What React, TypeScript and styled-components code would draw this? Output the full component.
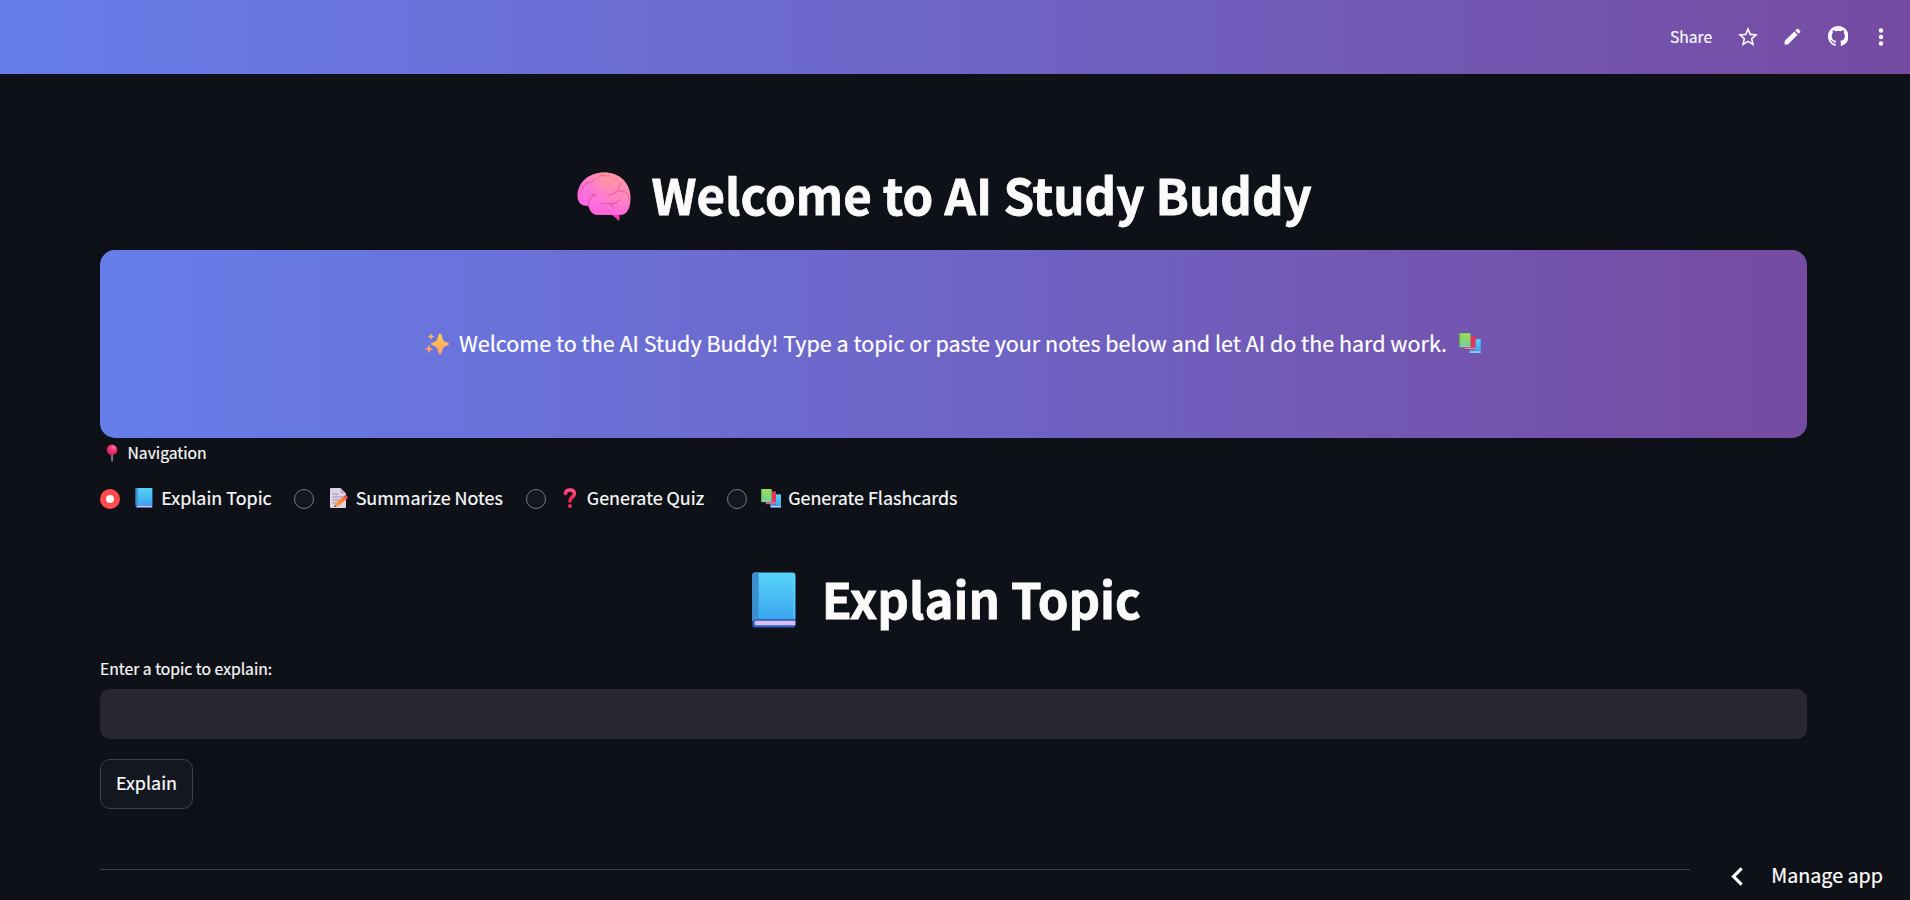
import React, { useState } from 'react';
import styled, { createGlobalStyle } from 'styled-components';
import { MdStarBorder, MdEdit, MdChevronLeft } from 'react-icons/md';

const GlobalStyle = createGlobalStyle`
  * { box-sizing: border-box; }
  body {
    margin: 0;
    background: #0e1117;
    color: #fafafa;
    font-family: "Noto Sans CJK JP", "Noto Sans", sans-serif;
    -webkit-text-stroke: 0.2px;
    overflow: hidden;
  }
`;

const gradient = 'linear-gradient(90deg, #667eea 0%, #764ba2 100%)';

const Page = styled.div`
  height: 900px;
  overflow: hidden;
`;

const Header = styled.header`
  height: 74px;
  padding: 0 26.5px 1px 0;
  display: flex;
  align-items: center;
  justify-content: flex-end;
  background: ${gradient};
`;

const ShareButton = styled.span`
  font-size: 15.7px;
  line-height: 24px;
  margin-right: 23.5px;
`;

const ToolbarIcon = styled.span<{ $gap: number }>`
  display: flex;
  margin-right: ${(p) => p.$gap}px;
`;

const Main = styled.main`
  padding: 0 103px 0 100px;
  display: flex;
  flex-direction: column;
`;

const Heading = styled.h1<{ $top: number; $gap: number; $shift: number }>`
  margin: ${(p) => p.$top}px 0 0;
  padding-right: ${(p) => p.$shift}px;
  display: flex;
  justify-content: center;
  align-items: center;
  gap: ${(p) => p.$gap}px;
  font-size: 49.15px;
  font-weight: 700;
  -webkit-text-stroke: 0.8px;
  line-height: 60px;
  height: 60px;
  white-space: nowrap;
  svg { margin-top: 4px; }
`;

const Banner = styled.section`
  margin-top: 26px;
  height: 188px;
  padding: 0 0 3px 3px;
  border-radius: 15px;
  background: ${gradient};
  display: flex;
  align-items: center;
  justify-content: center;
  gap: 9.5px;
  font-size: 21.5px;
  line-height: 31px;
  color: #fff;
  white-space: nowrap;
  svg { margin-top: 3px; }
`;

const NavLabel = styled.div`
  margin-top: 4px;
  padding-left: 6px;
  display: flex;
  align-items: center;
  gap: 7.5px;
  font-size: 15.7px;
  line-height: 22px;
`;

const RadioGroup = styled.div`
  margin-top: 22px;
  height: 26px;
  display: flex;
  gap: 22.7px;
`;

const RadioOption = styled.label`
  display: flex;
  align-items: center;
  svg { margin: 0 3.3px 0 12px; }
`;

const RadioDot = styled.span<{ $checked: boolean }>`
  width: 20px;
  height: 20px;
  border-radius: 50%;
  display: grid;
  place-items: center;
  background: ${(p) => (p.$checked ? '#ff4b4b' : '#131720')};
  border: ${(p) => (p.$checked ? '0' : '1.25px solid #77797c')};
  &::after {
    content: '';
    display: ${(p) => (p.$checked ? 'block' : 'none')};
    width: 8px;
    height: 8px;
    border-radius: 50%;
    background: #fafafa;
  }
`;

const RadioText = styled.span`
  font-size: 17.92px;
  line-height: 22px;
  padding-bottom: 5px;
  white-space: nowrap;
`;

const FieldLabel = styled.label`
  margin-top: 30px;
  font-size: 15.7px;
  line-height: 22px;
`;

const TopicInput = styled.input`
  margin-top: 9px;
  height: 50px;
  border: 0;
  outline: 0;
  border-radius: 10px;
  background: #262730;
  color: inherit;
  font: inherit;
  padding: 0 16px;
`;

const ExplainButton = styled.button`
  margin-top: 20px;
  width: 93px;
  height: 50px;
  padding: 0 0 5px;
  border: 1px solid #3e4147;
  border-radius: 10px;
  background: #131720;
  color: #fafafa;
  font-family: inherit;
  font-size: 17.95px;
`;

const Divider = styled.hr`
  width: 100%;
  margin: 60px 0 0;
  border: 0;
  height: 1px;
  background: #3d4045;
`;

const ManageApp = styled.div`
  position: fixed;
  right: 0;
  bottom: 0;
  width: 220px;
  height: 48px;
  padding: 0 27px 0 28.5px;
  display: flex;
  align-items: center;
  justify-content: space-between;
  background: #0e1117;
  color: #fff;
  font-size: 19.7px;
  line-height: 24px;
  span { padding-bottom: 3px; }
`;

const GithubIcon = () => (
  <svg width="20.5" height="20.5" viewBox="0 0 16 16" fill="currentColor">
    <path d="M8 0C3.58 0 0 3.58 0 8c0 3.54 2.29 6.53 5.47 7.59.4.07.55-.17.55-.38 0-.19-.01-.82-.01-1.49-2.01.37-2.53-.49-2.69-.94-.09-.23-.48-.94-.82-1.13-.28-.15-.68-.52-.01-.53.63-.01 1.08.58 1.23.82.72 1.21 1.87.87 2.33.66.07-.52.28-.87.51-1.07-1.78-.2-3.64-.89-3.64-3.95 0-.87.31-1.59.82-2.15-.08-.2-.36-1.02.08-2.12 0 0 .67-.21 2.2.82.64-.18 1.32-.27 2-.27s1.36.09 2 .27c1.53-1.04 2.2-.82 2.2-.82.44 1.1.16 1.92.08 2.12.51.56.82 1.27.82 2.15 0 3.07-1.87 3.75-3.65 3.95.29.25.54.73.54 1.48 0 1.07-.01 1.93-.01 2.2 0 .21.15.46.55.38A8.01 8.01 0 0 0 16 8c0-4.42-3.58-8-8-8z" />
  </svg>
);

const MoreIcon = () => (
  <svg width="6" height="18" viewBox="0 0 6 18" fill="currentColor">
    <circle cx="3" cy="2.6" r="2.25" />
    <circle cx="3" cy="9" r="2.25" />
    <circle cx="3" cy="15.4" r="2.25" />
  </svg>
);

const BrainIcon = () => (
  <svg width="54" height="50" viewBox="0 -1 54 50" fill="none">
    <defs>
      <linearGradient id="brain" x1="8" y1="36" x2="44" y2="6" gradientUnits="userSpaceOnUse">
        <stop stopColor="#ff66e8" />
        <stop offset=".5" stopColor="#ff7fcc" />
        <stop offset="1" stopColor="#ff8fb4" />
      </linearGradient>
      <radialGradient id="brainTop" cx="31" cy="3" r="20" gradientUnits="userSpaceOnUse">
        <stop stopColor="#ff9b96" stopOpacity=".85" />
        <stop offset="1" stopColor="#ff9b96" stopOpacity="0" />
      </radialGradient>
      <linearGradient id="brainLow" x1="0" y1="28" x2="0" y2="43" gradientUnits="userSpaceOnUse">
        <stop stopColor="#ff62dd" stopOpacity="0" />
        <stop offset="1" stopColor="#ff62dd" stopOpacity=".85" />
      </linearGradient>
    </defs>
    <path d="M34 42l7.400 6.500q1 .5 1-1V41z" fill="#f237b4" />
    {['brain', 'brainTop', 'brainLow'].map((fill) => (
      <path
        key={fill}
        d="M.5 24C.5 10 12 .5 27 .5S53.5 10 53.5 26c0 9-3 16.8-10 16.8H21c-5 0-8-3-9.5-8.8C5 34 .5 31 .5 24z"
        fill={`url(#${fill})`}
      />
    ))}
    <path d="M11.5 34c-.4-5 1.5-8.5 6.5-11" stroke="#d94fb4" strokeWidth="2.2" strokeLinecap="round" opacity=".45" />
    <path d="M14 22.5q2.5-1 4.5 1" stroke="#d23fa8" strokeWidth="1.2" strokeLinecap="round" opacity=".7" />
    <path d="M3.5 22c.5-5 3.5-10 9-11.5 3-.7 4.500-1.500 5.500-3.500" stroke="#e05a95" strokeWidth="1.3" strokeLinecap="round" opacity=".6" />
    <path d="M22 4.500q3-2 6-.8 2 .8 4.500-.2" stroke="#e4606f" strokeWidth="1.1" strokeLinecap="round" opacity=".7" />
    <path d="M32 23c3.500-.5 7-2.500 9.500-5 .3-3 1-5 2.500-7M41.500 18q2.500 2 6 1.500 4 2 4.500 9" stroke="#e2558f" strokeWidth="1.1" strokeLinecap="round" opacity=".7" />
    <path d="M23.500 31.500q6 .8 9-.3 6 1.500 10-3M32 31.500q3 1.500 4 4" stroke="#df4795" strokeWidth="1.1" strokeLinecap="round" opacity=".7" />
  </svg>
);

const BookGradient = ({ id }: { id: string }) => (
  <linearGradient id={id} x1="0" y1="0" x2="0" y2="1">
    <stop stopColor="#57d3f7" />
    <stop offset="1" stopColor="#3aa5ee" />
  </linearGradient>
);

const BigBookIcon = () => (
  <svg width="44" height="56" viewBox="0 0 44 56">
    <defs><BookGradient id="bigBook" /></defs>
    <rect x=".4" y="1" width="43" height="54.5" rx="2.8" fill="#2f5fc0" />
    <path d="M5 48.800h38.400v4.400H4.500a2.200 2.200 0 0 1 .5-4.400z" fill="#d9bde9" />
    <path d="M3.200 0.500h37.400a2.800 2.800 0 0 1 2.800 2.800V47H3.600Q1.500 47 .4 49V3.300A2.800 2.800 0 0 1 3.200.5z" fill="url(#bigBook)" />
    <path d="M3.200.5H6.600V47h-3Q1.500 47 .4 49V3.300A2.800 2.800 0 0 1 3.200.5z" fill="#3b8fcd" />
    <path d="M42 3v43" stroke="#68e0ff" strokeWidth="1.4" opacity=".6" />
  </svg>
);

const PinIcon = () => (
  <svg width="14" height="18" viewBox="0 0 14 18">
    <defs>
      <radialGradient id="pin" cx=".62" cy=".3" r=".7">
        <stop stopColor="#ff8cae" />
        <stop offset=".35" stopColor="#f83c76" />
        <stop offset="1" stopColor="#d91f62" />
      </radialGradient>
    </defs>
    <rect x="5.2" y="9" width="1.7" height="8.5" rx=".8" fill="#90839a" />
    <circle cx="6" cy="5.7" r="5.3" fill="url(#pin)" />
  </svg>
);

const SmallBookIcon = () => (
  <svg width="26" height="24" viewBox="0 0 26 24">
    <defs><BookGradient id="smallBook" /></defs>
    <rect x="3.7" y="1" width="16.6" height="20" rx="1" fill="#3568c4" />
    <rect x="5" y="18.6" width="15.3" height="1.5" fill="#d9c4ee" />
    <path d="M4.700 1h14.600a1 1 0 0 1 1 1v16H3.700V2a1 1 0 0 1 1-1z" fill="url(#smallBook)" />
    <path d="M4.700 1H6v17H3.700V2a1 1 0 0 1 1-1z" fill="#3b93d2" />
  </svg>
);

const MemoIcon = () => (
  <svg width="26" height="24" viewBox="0 0 26 24">
    <defs>
      <linearGradient id="pencil" x1="8" y1="20" x2="21" y2="9" gradientUnits="userSpaceOnUse">
        <stop stopColor="#ffa84c" />
        <stop offset="1" stopColor="#f66a2c" />
      </linearGradient>
    </defs>
    <path d="M5 1h9.500l5.500 5.500V20a1 1 0 0 1-1 1H5a1 1 0 0 1-1-1V2a1 1 0 0 1 1-1z" fill="#dfd3e6" />
    <path d="M14.500 1v4.500a1 1 0 0 0 1 1H20z" fill="#b8a9c4" />
    <path d="M6.500 7h6M6.500 10h10M6.500 13h7M6.500 16h4" stroke="#9d8da8" strokeWidth="1" />
    <path d="M8 20.300l1.200-4.100 8-6.800 3 3-8.200 7z" fill="url(#pencil)" />
    <path d="M17.200 9.400l1.800-1.300q2.500.5 3 3l-1.800 1.300z" fill="#f8464f" />
    <path d="M8 20.300l.7-2.300 1.500 1.700z" fill="#5b3a4a" />
  </svg>
);

const QuestionIcon = () => (
  <svg width="26" height="24" viewBox="0 0 26 24" fill="none">
    <defs>
      <linearGradient id="question" x1="14" y1="1" x2="11" y2="20" gradientUnits="userSpaceOnUse">
        <stop stopColor="#fb5b92" />
        <stop offset=".6" stopColor="#f3224f" />
        <stop offset="1" stopColor="#f8315a" />
      </linearGradient>
    </defs>
    <path d="M7.400 6.500C7.600 4.300 9.500 3 12 3c2.600 0 4.400 1.400 4.400 3.800 0 3.700-4.400 3.300-4.400 7.200" stroke="url(#question)" strokeWidth="3.6" strokeLinecap="round" />
    <circle cx="12" cy="19" r="2" fill="#f02b54" />
  </svg>
);

const BooksIcon = ({ id, width, height }: { id: string; width: number; height: number }) => (
  <svg width={width} height={height} viewBox="0 0 26 24">
    <defs>
      <linearGradient id={id + 'Green'} x1="0" y1="0" x2="0" y2="1">
        <stop stopColor="#a0dc55" />
        <stop offset="1" stopColor="#6fd58e" />
      </linearGradient>
      <BookGradient id={id + 'Blue'} />
    </defs>
    <rect x="11.2" y="7.5" width="10.8" height="13.5" fill="#3a6fca" />
    <rect x="11.8" y="18.8" width="10.2" height="1.3" fill="#cdd8f2" />
    <rect x="11.2" y="7.5" width="10.8" height="11" fill={`url(#${id}Blue)`} />
    <rect x="6.5" y="4.5" width="10.5" height="12.8" fill="#b52256" />
    <rect x="7" y="15.4" width="10" height="1.1" fill="#deb2d0" />
    <rect x="6.5" y="4.5" width="10.5" height="10.5" fill="#e8325e" />
    <rect x="2" y="2" width="10.5" height="13.3" rx=".5" fill="#3f9a62" />
    <rect x="2.6" y="13.4" width="9.9" height="1.1" fill="#d5e3df" />
    <rect x="2" y="2" width="10.5" height="11" rx=".5" fill={`url(#${id}Green)`} />
    <rect x="2" y="2" width="1.2" height="11" fill="#62b351" />
  </svg>
);

const SparklesIcon = () => (
  <svg width="24" height="22" viewBox="0 0 24 22">
    <defs>
      <linearGradient id="spark" x1="0" y1="0" x2="0" y2="1">
        <stop stopColor="#ffd04f" />
        <stop offset="1" stopColor="#ff9d68" />
      </linearGradient>
    </defs>
    <path d="M13.900 1Q15 0 16.100 1L18 6.700Q18.500 8 19.800 8.600L23.300 10Q24.600 11 23.300 12L19.800 13.400Q18.500 14 18 15.300L16.100 21Q15 22 13.900 21L12 15.300Q11.500 14 10.200 13.400L6.700 12Q5.400 11 6.700 10L10.200 8.600Q11.500 8 12 6.700z" fill="url(#spark)" />
    <path d="M6 .2l1 2.300 2.300 1L7 4.500 6 6.800 5 4.500l-2.300-1L5 2.500z" fill="#ffb95b" />
    <path d="M4 11.500l1.200 3L8 15.900l-2.800 1.300L4 20.700l-1.200-3.500L0 15.900l2.800-1.400z" fill="#ff9f68" />
  </svg>
);

const options = [
  { label: 'Explain Topic', icon: <SmallBookIcon /> },
  { label: 'Summarize Notes', icon: <MemoIcon /> },
  { label: 'Generate Quiz', icon: <QuestionIcon /> },
  { label: 'Generate Flashcards', icon: <BooksIcon id="nav" width={26} height={24} /> },
];

export default function App() {
  const [selected, setSelected] = useState(0);
  return (
    <Page>
      <GlobalStyle />
      <Header>
        <ShareButton>Share</ShareButton>
        <ToolbarIcon $gap={22.5}><MdStarBorder size={24} /></ToolbarIcon>
        <ToolbarIcon $gap={24.5}><MdEdit size={21} /></ToolbarIcon>
        <ToolbarIcon $gap={29.3}><GithubIcon /></ToolbarIcon>
        <ToolbarIcon $gap={0}><MoreIcon /></ToolbarIcon>
      </Header>
      <Main>
        <Heading $top={90} $gap={21} $shift={18.6}>
          <BrainIcon />
          Welcome to AI Study Buddy
        </Heading>
        <Banner>
          <SparklesIcon />
          Welcome to the AI Study Buddy! Type a topic or paste your notes below and let AI do the hard work.
          <BooksIcon id="banner" width={28} height={28} />
        </Banner>
        <NavLabel>
          <PinIcon />
          Navigation
        </NavLabel>
        <RadioGroup role="radiogroup">
          {options.map((o, i) => (
            <RadioOption key={o.label} onClick={() => setSelected(i)}>
              <RadioDot $checked={i === selected} />
              {o.icon}
              <RadioText>{o.label}</RadioText>
            </RadioOption>
          ))}
        </RadioGroup>
        <Heading $top={56} $gap={25.3} $shift={13.6}>
          <BigBookIcon />
          Explain Topic
        </Heading>
        <FieldLabel htmlFor="topic">Enter a topic to explain:</FieldLabel>
        <TopicInput id="topic" />
        <ExplainButton>Explain</ExplainButton>
        <Divider />
      </Main>
      <ManageApp>
        <MdChevronLeft size={37} />
        <span>Manage app</span>
      </ManageApp>
    </Page>
  );
}
